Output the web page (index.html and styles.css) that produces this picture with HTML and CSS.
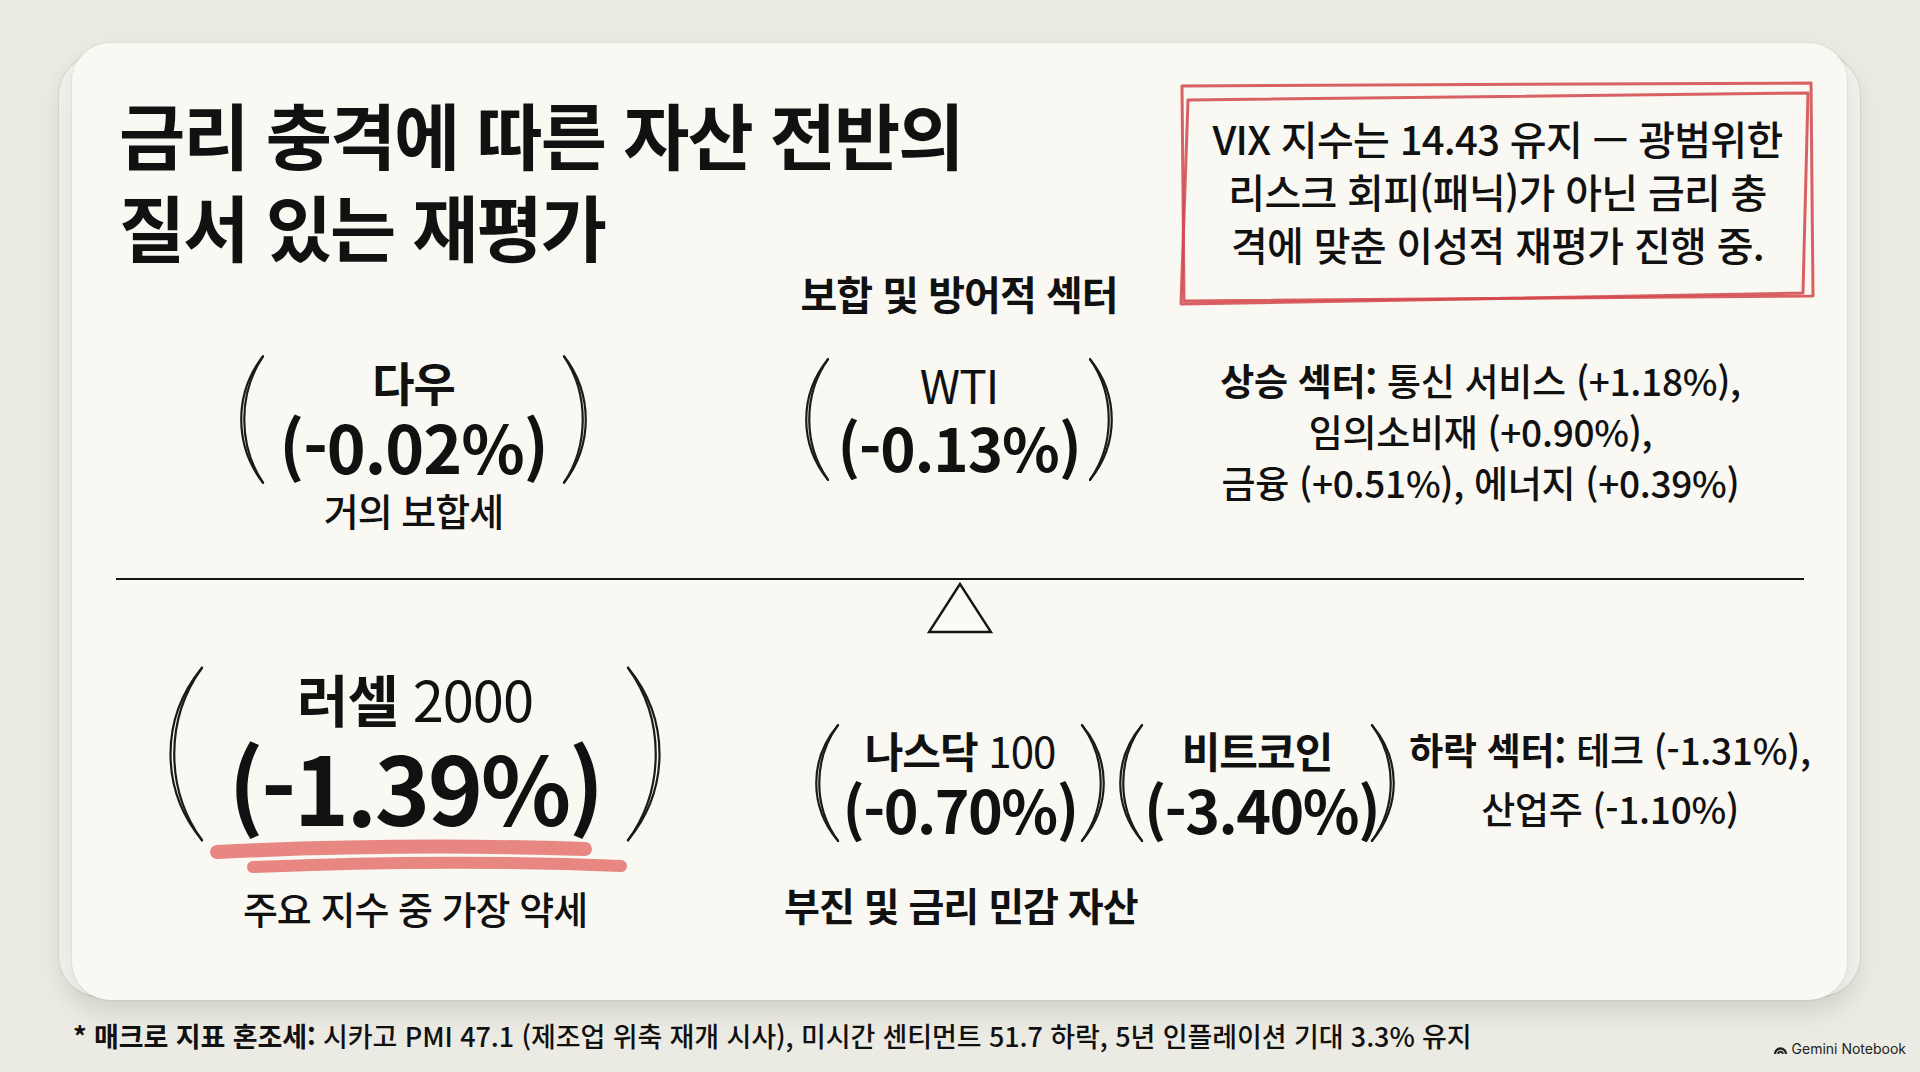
FILE: index.html
```html
<!DOCTYPE html>
<html lang="ko">
<head>
<meta charset="utf-8">
<title>금리 충격에 따른 자산 전반의 질서 있는 재평가</title>
<link rel="stylesheet" href="styles.css">
</head>
<body>
<div class="page">
  <section class="card">
    <div class="top">
      <h1 class="title">금리 충격에 따른 자산 전반의<br>질서 있는 재평가</h1>
      <div class="vix">
        <svg class="vix-frame" viewBox="0 0 637 224" preserveAspectRatio="none">
          <path d="M3 6 L632 3 L634 216 L5 221 Z"/>
          <path d="M9 20 L629 13 L624 213 L2 224 Z"/>
        </svg>
        <p class="vix-text">VIX 지수는 14.43 유지 — 광범위한<br>리스크 회피(패닉)가 아닌 금리 충<br>격에 맞춘 이성적 재평가 진행 중.</p>
      </div>
    </div>

    <div class="upper">
      <div class="label-top">보합 및 방어적 섹터</div>

      <div class="asset dow">
        <div class="grp">
          <svg class="paren paren-dow" viewBox="0 0 26 100" preserveAspectRatio="none"><path d="M24 1 C-5 30 -5 70 24 99"/><path d="M24 1 C-1 30 -1 70 24 99"/></svg>
          <div class="gt gt-dow">
            <div class="name-md"><b>다우</b></div>
            <div class="num-md">(-0.02%)</div>
          </div>
          <svg class="paren paren-dow" viewBox="0 0 26 100" preserveAspectRatio="none"><path d="M2 1 C31 30 31 70 2 99"/><path d="M2 1 C27 30 27 70 2 99"/></svg>
        </div>
        <div class="cap cap-dow">거의 보합세</div>
      </div>

      <div class="asset wti">
        <div class="grp">
          <svg class="paren paren-wti" viewBox="0 0 26 100" preserveAspectRatio="none"><path d="M24 1 C-5 30 -5 70 24 99"/><path d="M24 1 C-1 30 -1 70 24 99"/></svg>
          <div class="gt gt-wti">
            <div class="name-md">WTI</div>
            <div class="num-md num-wti">(-0.13%)</div>
          </div>
          <svg class="paren paren-wti" viewBox="0 0 26 100" preserveAspectRatio="none"><path d="M2 1 C31 30 31 70 2 99"/><path d="M2 1 C27 30 27 70 2 99"/></svg>
        </div>
      </div>

      <p class="sectors sectors-up"><b>상승 섹터:</b> 통신 서비스 (+1.18%),<br>임의소비재 (+0.90%),<br>금융 (+0.51%), 에너지 (+0.39%)</p>
    </div>

    <div class="divider"></div>
    <svg class="fulcrum" viewBox="0 0 66 52"><polygon points="33,2 2,50 64,50"/></svg>

    <div class="lower">
      <div class="asset russell">
        <div class="grp">
          <svg class="paren paren-lg" viewBox="0 0 36 100" preserveAspectRatio="none"><path d="M34 1 C-8 30 -8 70 34 99"/><path d="M34 1 C-3 30 -3 70 34 99"/></svg>
          <div class="gt gt-russell">
            <div class="name-lg"><b>러셀</b> 2000</div>
            <div class="num-lg">(-1.39%)</div>
          </div>
          <svg class="paren paren-lg" viewBox="0 0 36 100" preserveAspectRatio="none"><path d="M2 1 C44 30 44 70 2 99"/><path d="M2 1 C39 30 39 70 2 99"/></svg>
        </div>
        <svg class="underline" viewBox="0 0 430 40">
          <path class="ul-a" d="M12 12 Q200 3 380 9"/>
          <path class="ul-b" d="M48 27 Q240 19 416 26"/>
        </svg>
        <div class="cap cap-russell">주요 지수 중 가장 약세</div>
      </div>

      <div class="pair-wrap">
        <div class="pair">
          <div class="grp">
            <svg class="paren paren-sm" viewBox="0 0 26 100" preserveAspectRatio="none"><path d="M24 1 C-5 30 -5 70 24 99"/><path d="M24 1 C-1 30 -1 70 24 99"/></svg>
            <div class="gt gt-nas">
              <div class="name-sm"><b>나스닥</b> 100</div>
              <div class="num-sm">(-0.70%)</div>
            </div>
            <svg class="paren paren-sm" viewBox="0 0 26 100" preserveAspectRatio="none"><path d="M2 1 C31 30 31 70 2 99"/><path d="M2 1 C27 30 27 70 2 99"/></svg>
          </div>
          <div class="grp">
            <svg class="paren paren-sm" viewBox="0 0 26 100" preserveAspectRatio="none"><path d="M24 1 C-5 30 -5 70 24 99"/><path d="M24 1 C-1 30 -1 70 24 99"/></svg>
            <div class="gt gt-btc">
              <div class="name-sm"><b>비트코인</b></div>
              <div class="num-sm">(-3.40%)</div>
            </div>
            <svg class="paren paren-sm" viewBox="0 0 26 100" preserveAspectRatio="none"><path d="M2 1 C31 30 31 70 2 99"/><path d="M2 1 C27 30 27 70 2 99"/></svg>
          </div>
        </div>
        <div class="cap cap-weak">부진 및 금리 민감 자산</div>
      </div>

      <p class="sectors sectors-down"><b>하락 섹터:</b> 테크 (-1.31%),<br>산업주 (-1.10%)</p>
    </div>
  </section>

  <footer class="foot">
    <p class="note"><b>* 매크로 지표 혼조세:</b> 시카고 PMI 47.1 (제조업 위축 재개 시사), 미시간 센티먼트 51.7 하락, 5년 인플레이션 기대 3.3% 유지</p>
    <div class="brand">
      <svg class="brand-logo" viewBox="0 0 18 12"><path d="M1 12 A8 8 0 0 1 17 12 H14.2 A5.2 5.2 0 0 0 3.8 12 Z"/><path d="M5.2 12 A3.8 3.8 0 0 1 12.8 12 H10.6 A1.6 1.6 0 0 0 7.4 12 Z"/></svg>
      <span>Gemini Notebook</span>
    </div>
  </footer>
</div>
</body>
</html>
```

FILE: styles.css
```css
* { box-sizing: border-box; }
html, body { margin: 0; padding: 0; }
body {
  width: 1920px;
  height: 1072px;
  overflow: hidden;
  background: #ecebe3;
  color: #111;
  font-family: "Noto Sans CJK KR", "Noto Sans", sans-serif;
}
b { font-weight: 700; }

.page { padding: 43px 73px 0 72px; }

.card {
  position: relative;
  height: 957px;
  background: #f9f8f3;
  border-radius: 38px;
  box-shadow: 0 0 0 1px rgba(0,0,0,0.04), 0 12px 30px rgba(0,0,0,0.07);
}
.card::before,
.card::after {
  content: "";
  position: absolute;
  border-radius: 40px;
  z-index: -1;
}
.card::before {
  inset: 6px -7px 2px -7px;
  background: #f5f4ee;
  box-shadow: 0 0 0 1px rgba(0,0,0,0.06);
}
.card::after {
  inset: 12px -13px 4px -13px;
  background: #f2f1eb;
  box-shadow: 0 0 0 1px rgba(0,0,0,0.06), 0 10px 24px rgba(0,0,0,0.07);
}

/* top row */
.top {
  display: flex;
  justify-content: space-between;
  align-items: flex-start;
  padding: 37px 31px 0 47px;
}
.title {
  margin: 7px 0 0 0;
  font-size: 72px;
  line-height: 92px;
  font-weight: 700;
  letter-spacing: -2px;
  white-space: nowrap;
}
.vix {
  position: relative;
  width: 637px;
  height: 224px;
  padding: 32px 10px 0;
}
.vix-frame {
  position: absolute;
  inset: 0;
  width: 100%;
  height: 100%;
  overflow: visible;
}
.vix-frame path {
  fill: none;
  stroke: #d4474c;
  stroke-width: 3;
  stroke-linejoin: round;
  opacity: 0.85;
  vector-effect: non-scaling-stroke;
}
.vix-text {
  position: relative;
  margin: 0;
  text-align: center;
  font-size: 40px;
  line-height: 53px;
  font-weight: 500;
  letter-spacing: -0.7px;
  white-space: nowrap;
}

/* upper balance */
.upper {
  display: grid;
  grid-template-columns: 565px 310px 1fr;
  row-gap: 40px;
  margin-top: -33px;
  padding-left: 167px;
}
.label-top {
  grid-column: 2;
  grid-row: 1;
  justify-self: center;
  text-align: center;
  font-size: 40px;
  line-height: 44px;
  font-weight: 700;
  letter-spacing: -1px;
  white-space: nowrap;
}
.dow { grid-column: 1; grid-row: 2; justify-self: start; }
.wti { grid-column: 2; grid-row: 2; justify-self: center; margin-top: 3px; }
.sectors-up { grid-column: 3; grid-row: 2; margin-top: 12px; }

.asset { display: flex; flex-direction: column; align-items: center; }
.grp { display: flex; align-items: flex-start; }
.gt { text-align: center; white-space: nowrap; }
.gt-dow { width: 297px; }
.gt-wti { width: 258px; }
.gt-russell { width: 422px; }
.gt-nas { width: 240px; }
.gt-btc { width: 226px; }

.paren { display: block; width: 26px; flex: none; overflow: visible; }
.paren path {
  fill: none;
  stroke: #1b1b1b;
  stroke-width: 2.2;
  stroke-linecap: round;
  vector-effect: non-scaling-stroke;
}
.paren-dow { height: 129px; }
.paren-wti { height: 123px; }
.paren-lg { width: 36px; height: 176px; }
.paren-sm { height: 118px; }

.name-md { font-size: 46px; line-height: 52px; font-weight: 400; letter-spacing: -1px; }
.num-md { font-size: 66px; line-height: 77px; font-weight: 700; letter-spacing: -1px; }
.num-wti { font-size: 60px; line-height: 71px; }
.name-lg { font-size: 56px; line-height: 64px; font-weight: 400; letter-spacing: -1px; }
.num-lg { font-size: 94px; line-height: 110px; font-weight: 700; letter-spacing: -2.5px; }
.name-sm { font-size: 42px; line-height: 52px; font-weight: 400; letter-spacing: -1px; }
.num-sm { font-size: 59px; line-height: 66px; font-weight: 700; letter-spacing: -1.5px; }

.cap {
  font-size: 38px;
  line-height: 44px;
  font-weight: 500;
  letter-spacing: -1px;
  white-space: nowrap;
}
.cap-dow { margin-top: 4px; }
.cap-russell { margin-top: 6px; }
.cap-weak {
  margin: 40px 0 0 -30px;
  font-size: 39px;
  font-weight: 700;
}

.sectors {
  margin: 0;
  text-align: center;
  font-size: 37px;
  line-height: 51px;
  font-weight: 500;
  letter-spacing: -0.3px;
  white-space: nowrap;
}

/* divider + fulcrum */
.divider {
  height: 2px;
  margin: 46px 43px 0 44px;
  background: #151515;
}
.fulcrum {
  display: block;
  width: 66px;
  height: 52px;
  margin: 2px auto 0;
}
.fulcrum polygon {
  fill: #fbfaf6;
  stroke: #151515;
  stroke-width: 2.4;
  stroke-linejoin: miter;
}

/* lower balance */
.lower {
  display: grid;
  grid-template-columns: 646px 586px 420px;
  align-items: start;
  margin-top: 32px;
  padding-left: 96px;
}
.russell { justify-self: start; }
.underline {
  display: block;
  width: 430px;
  height: 40px;
  margin-left: 10px;
  margin-top: -2px;
  overflow: visible;
}
.underline path {
  fill: none;
  stroke: #e36a64;
  stroke-linecap: round;
  opacity: 0.8;
}
.ul-a { stroke-width: 14; }
.ul-b { stroke-width: 12; }

.pair-wrap { margin-top: 58px; display: flex; flex-direction: column; align-items: flex-start; }
.pair { display: flex; gap: 12px; }

.sectors-down {
  justify-self: stretch;
  margin-top: 54px;
  line-height: 59px;
}

/* footer */
.foot {
  display: flex;
  justify-content: space-between;
  align-items: flex-start;
  margin: 18px -59px 0 1px;
}
.note {
  margin: 0;
  font-size: 27px;
  line-height: 36px;
  font-weight: 500;
  letter-spacing: -0.1px;
  white-space: nowrap;
}
.brand {
  display: flex;
  align-items: center;
  gap: 4px;
  margin-top: 23px;
  font-family: "Inter", "Liberation Sans", sans-serif;
  font-size: 14px;
  line-height: 16px;
  color: #222;
}
.brand-logo { width: 15px; height: 10px; }
.brand-logo path { fill: #222; }
```
